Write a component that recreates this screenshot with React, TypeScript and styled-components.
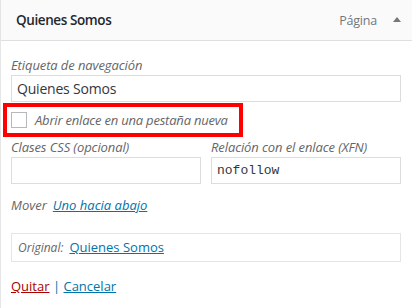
import React from 'react'
import styled, { createGlobalStyle } from 'styled-components'

const GlobalStyle = createGlobalStyle`
  html, body {
    margin: 0;
    padding: 0;
    background: #fff;
  }
  body {
    font-family: "Open Sans", "Noto Sans", sans-serif;
    color: #23282d;
  }
`

const COLORS = {
  LABEL: '#666',
  BORDER: '#ddd',
  LINK: '#0073aa',
  DELETE: '#a00',
}

const Panel = styled.div`
  width: 411px;
  height: 308px;
  border-left: 1px solid #e5e5e5;
  box-sizing: content-box;
`

const Header = styled.div`
  height: 40px;
  display: flex;
  align-items: center;
  padding: 0 11px 0 15px;
  background: #fafafa;
  border-bottom: 1px solid #dfdfdf;
`

const Title = styled.span`
  flex: 1;
  font-size: 13.5px;
  font-weight: 600;
  letter-spacing: -0.4px;
  color: #23282d;
  margin-top: -1px;
`

const ItemType = styled.span`
  font-size: 12.5px;
  letter-spacing: -0.2px;
  color: #72777c;
  margin-right: 16px;
`

const Toggle = styled.svg`
  width: 8px;
  height: 5px;
  fill: #72777c;
  margin-top: -2px;
`

const Settings = styled.div`
  padding: 15px 11px 0 10px;
  display: flex;
  flex-direction: column;
`

const Label = styled.label`
  display: block;
  font-size: 13px;
  line-height: 18px;
  font-style: italic;
  letter-spacing: -0.1px;
  color: ${COLORS.LABEL};
`

const TextInput = styled.input<{ $mono?: boolean }>`
  display: block;
  box-sizing: border-box;
  width: 100%;
  height: 27px;
  margin: 1px 0 0;
  padding: 0 5px;
  border: 1px solid ${COLORS.BORDER};
  font-family: ${p => (p.$mono ? '"Liberation Mono", "DejaVu Sans Mono", monospace' : '"Open Sans", "Noto Sans", sans-serif')};
  font-size: ${p => (p.$mono ? '13px' : '14px')};
  letter-spacing: ${p => (p.$mono ? '0' : '-0.2px')};
  color: #32373c;
  background: #fff;
  outline: none;
`

const Highlight = styled.div`
  margin: 1px 0 0 -8px;
  width: 240px;
  height: 34px;
  box-sizing: border-box;
  border: 4px solid #f00;
  display: flex;
  align-items: center;
  padding-left: 4px;
`

const Checkbox = styled.span`
  width: 16px;
  height: 16px;
  box-sizing: border-box;
  border: 1px solid #b4b9be;
  background: #fff;
  margin-right: 8px;
  margin-top: -1px;
`

const CheckLabel = styled.span`
  font-size: 13px;
  font-style: italic;
  letter-spacing: -0.2px;
  color: ${COLORS.LABEL};
`

const FieldRow = styled.div`
  display: grid;
  grid-template-columns: 190px 190px;
  column-gap: 10px;
  margin-top: 1px;
`

const Move = styled.div`
  margin-top: 12px;
  font-size: 13px;
  line-height: 18px;
  font-style: italic;
  color: ${COLORS.LABEL};
  display: flex;
  gap: 6px;
`

const Link = styled.a<{ $danger?: boolean }>`
  color: ${p => (p.$danger ? COLORS.DELETE : COLORS.LINK)};
  text-decoration: underline;
  font-style: inherit;
`

const Original = styled.div`
  margin-top: 19px;
  height: 29px;
  box-sizing: border-box;
  border: 1px solid #e5e5e5;
  display: flex;
  align-items: center;
  padding: 0 0 1px 6px;
  font-size: 13px;
  gap: 6px;
`

const OriginalLabel = styled.span`
  font-style: italic;
  font-size: 12px;
  color: ${COLORS.LABEL};
`

const Actions = styled.div`
  margin-top: 15px;
  font-size: 13px;
  line-height: 18px;
  color: ${COLORS.LINK};
`

const App = () => (
  <>
    <GlobalStyle />
    <Panel>
      <Header>
        <Title>Quienes Somos</Title>
        <ItemType>Página</ItemType>
        <Toggle viewBox="0 0 8 5">
          <polygon points="0,5 4,0 8,5" />
        </Toggle>
      </Header>
      <Settings>
        <Label>Etiqueta de navegación</Label>
        <TextInput defaultValue="Quienes Somos" />
        <Highlight>
          <Checkbox />
          <CheckLabel>Abrir enlace en una pestaña nueva</CheckLabel>
        </Highlight>
        <FieldRow>
          <div>
            <Label>Clases CSS (opcional)</Label>
            <TextInput />
          </div>
          <div>
            <Label>Relación con el enlace (XFN)</Label>
            <TextInput $mono defaultValue="nofollow" />
          </div>
        </FieldRow>
        <Move>
          Mover
          <Link href="#">Uno hacia abajo</Link>
        </Move>
        <Original>
          <OriginalLabel>Original:</OriginalLabel>
          <Link href="#">Quienes Somos</Link>
        </Original>
        <Actions>
          <Link $danger href="#">Quitar</Link> | <Link href="#">Cancelar</Link>
        </Actions>
      </Settings>
    </Panel>
  </>
)

export default App
